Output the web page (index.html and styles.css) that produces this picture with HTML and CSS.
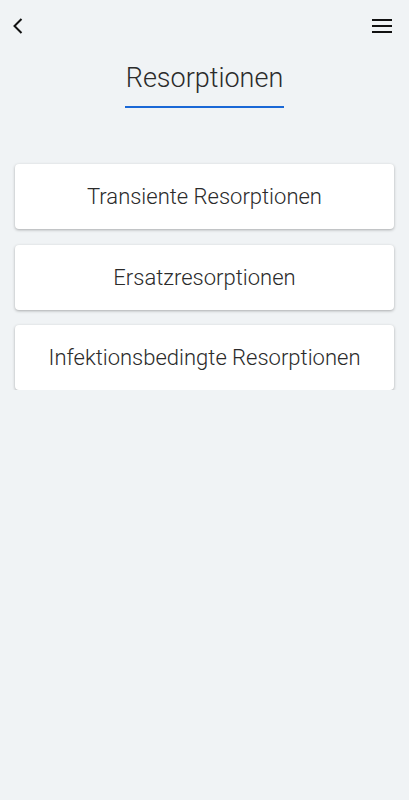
FILE: index.html
```html
<!doctype html>
<html>

<head>
  <meta charset="UTF-8">
  <title>Resorptionen</title>
  <link rel="stylesheet" href="styles.css">
</head>

<body>
  <header class="topbar">
    <button class="icon-btn" aria-label="Zurück">
      <svg width="12" height="18" viewBox="0 0 12 18">
        <path d="M9.5 2 L2.5 9 L9.5 16" fill="none" stroke="#111" stroke-width="2" />
      </svg>
    </button>
    <button class="icon-btn" aria-label="Menü">
      <svg width="20" height="16" viewBox="0 0 20 16">
        <rect x="0" y="1" width="20" height="2" fill="#111" />
        <rect x="0" y="7" width="20" height="2" fill="#111" />
        <rect x="0" y="13" width="20" height="2" fill="#111" />
      </svg>
    </button>
  </header>

  <div class="title-wrap">
    <h1 class="title">Resorptionen</h1>
  </div>

  <ul class="menu">
    <li class="card">Transiente Resorptionen</li>
    <li class="card">Ersatzresorptionen</li>
    <li class="card">Infektionsbedingte Resorptionen</li>
  </ul>
</body>

</html>
```

FILE: styles.css
```css
body {
  margin: 0;
  background-color: #f0f3f5;
  font-family: "Roboto Light", Roboto, "Noto Sans", sans-serif;
  font-weight: 300;
  color: #2b2b2b;
}

.topbar {
  display: flex;
  justify-content: space-between;
  align-items: center;
  padding: 17px 17px 0 12px;
  height: 18px;
}

.icon-btn {
  border: 0;
  padding: 0;
  background: none;
  display: flex;
}

.title-wrap {
  display: flex;
  justify-content: center;
  padding-top: 27px;
}

.title {
  margin: 0;
  font-size: 27px;
  font-weight: 300;
  line-height: 32px;
  padding: 0 1px 12px;
  border-bottom: 2px solid #1a68d6;
}

.menu {
  list-style: none;
  margin: 0;
  padding: 56px 15px 0;
  display: flex;
  flex-direction: column;
  gap: 15.5px;
}

.card {
  background: #fff;
  border-radius: 4px;
  height: 65px;
  display: flex;
  align-items: center;
  justify-content: center;
  font-size: 22px;
  box-shadow: 0 1px 3px rgba(0, 0, 0, 0.3);
}
```
